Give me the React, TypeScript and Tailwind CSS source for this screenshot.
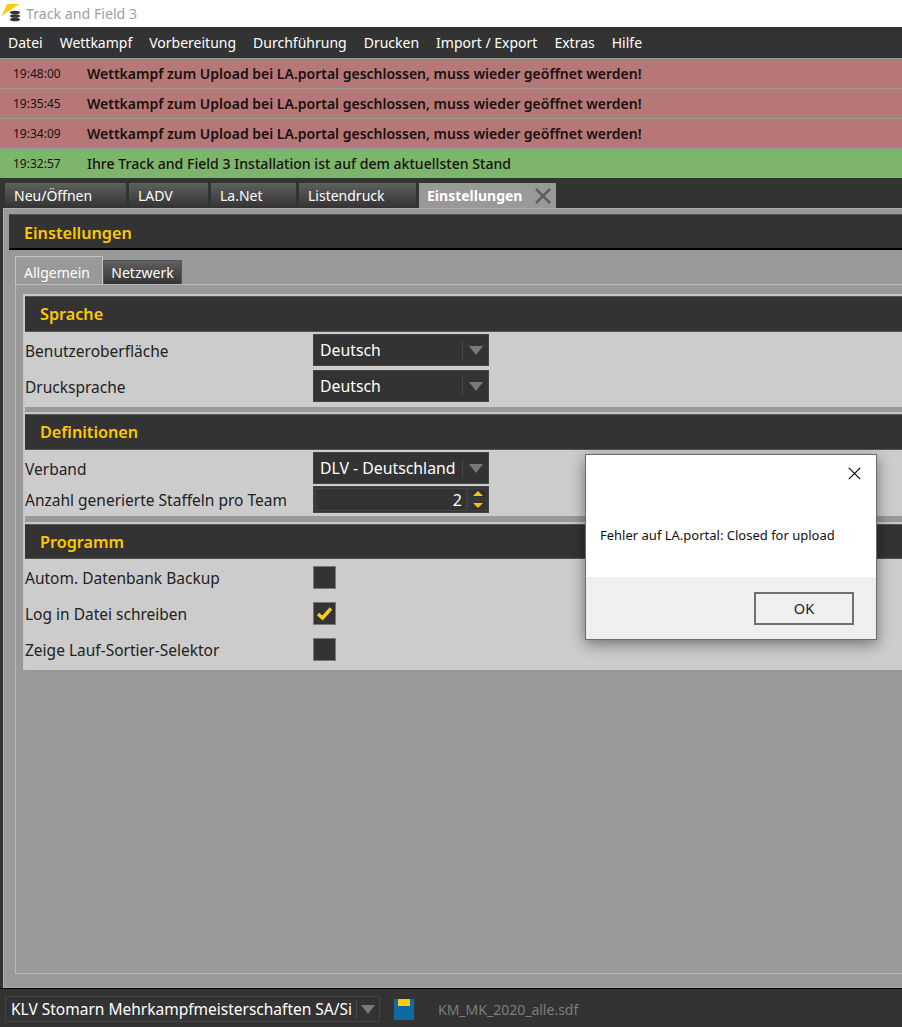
import React from "react";

const menuItems = ["Datei", "Wettkampf", "Vorbereitung", "Durchführung", "Drucken", "Import / Export", "Extras", "Hilfe"];

const messages = [
  { time: "19:48:00", text: "Wettkampf zum Upload bei LA.portal geschlossen, muss wieder geöffnet werden!", ok: false },
  { time: "19:35:45", text: "Wettkampf zum Upload bei LA.portal geschlossen, muss wieder geöffnet werden!", ok: false },
  { time: "19:34:09", text: "Wettkampf zum Upload bei LA.portal geschlossen, muss wieder geöffnet werden!", ok: false },
  { time: "19:32:57", text: "Ihre Track and Field 3 Installation ist auf dem aktuellsten Stand", ok: true },
];

function Logo() {
  return (
    <svg width="22" height="27" viewBox="0 0 22 27" className="shrink-0">
      <polygon points="1.5,16 7,4 19.5,4" fill="#fcc913" />
      <ellipse cx="15" cy="12.5" rx="5" ry="1.8" fill="#333" />
      <ellipse cx="15" cy="16" rx="5" ry="1.8" fill="#333" />
      <ellipse cx="15" cy="19.5" rx="5" ry="1.8" fill="#333" />
    </svg>
  );
}

function CloseIcon({ size, stroke, color }: { size: number; stroke: number; color: string }) {
  return (
    <svg width={size} height={size} viewBox="0 0 16 16" className="shrink-0">
      <path d="M1 1L15 15M15 1L1 15" fill="none" stroke={color} strokeWidth={stroke} />
    </svg>
  );
}

function Arrow() {
  return <span className="h-0 w-0 border-x-[7px] border-t-[9px] border-x-transparent border-t-[#7a7a7a]" />;
}

function Dropdown({ value }: { value: string }) {
  return (
    <div className="flex h-[32px] w-[176px] items-center border border-[#444] bg-[#333] pl-[6px] text-[15.8px] text-white">
      <span className="flex-1 whitespace-nowrap pt-[2px]">{value}</span>
      <span className="h-[19px] w-px bg-[#484848]" />
      <span className="flex w-[25px] justify-center">
        <Arrow />
      </span>
    </div>
  );
}

function Spinner() {
  return (
    <div className="flex h-[27px] w-[176px] items-stretch border border-[#444] bg-[#333] p-px text-[16px] text-white">
      <span className="flex flex-1 items-center justify-end border border-[#444] pr-[4px] pt-[1px]">2</span>
      <span className="flex w-[20px] flex-col gap-px pl-px">
        <span className="flex flex-1 items-center justify-center border border-[#3d3d3d]">
          <span className="h-0 w-0 border-x-[5px] border-b-[5px] border-x-transparent border-b-[#f5c211]" />
        </span>
        <span className="flex flex-1 items-center justify-center border border-[#3d3d3d]">
          <span className="h-0 w-0 border-x-[5px] border-t-[5px] border-x-transparent border-t-[#f5c211]" />
        </span>
      </span>
    </div>
  );
}

function CheckBox({ checked }: { checked?: boolean }) {
  return (
    <div className="flex h-[23px] w-[23px] items-center justify-center border border-[#777] bg-[#333]">
      {checked && (
        <svg width="17" height="15" viewBox="0 0 17 15">
          <path d="M2 8L6.5 12L15 2.5" fill="none" stroke="#f9c824" strokeWidth="3.4" />
        </svg>
      )}
    </div>
  );
}

function SectionHeader({ title, className }: { title: string; className: string }) {
  return (
    <div className={`flex items-center border-y border-[#555] bg-[#333] pl-[15px] text-[16.2px] font-semibold text-[#ffc800] ${className}`}>
      {title}
    </div>
  );
}

function Row({ label, height, children }: { label: string; height: string; children: React.ReactNode }) {
  return (
    <div className={`flex items-center ${height}`}>
      <span className="w-[288px] whitespace-nowrap pt-[3px] text-[15.5px] text-[#222]">{label}</span>
      {children}
    </div>
  );
}

export default function App() {
  return (
    <div className="relative flex h-[1027px] w-[902px] flex-col overflow-hidden bg-[#333] font-['Noto_Sans',sans-serif]">
      {/* title bar */}
      <div className="flex h-[27px] items-center gap-[4px] bg-white text-[14.2px] text-[#9aa2a8]">
        <Logo />
        <span>Track and Field 3</span>
      </div>

      {/* menu */}
      <div className="flex h-[31px] items-center gap-[17px] bg-[#333] pl-[8px] text-[14px] text-white">
        {menuItems.map((item) => (
          <span key={item}>{item}</span>
        ))}
      </div>

      {/* log messages */}
      <div className="flex flex-col bg-[#999] pt-px">
        {messages.map((m) => (
          <div
            key={m.time}
            className={`flex h-[30px] items-center border-b border-[#999] text-[#1a1010] last:h-[29px] last:border-b-0 ${m.ok ? "bg-[#7db56c]" : "bg-[#b57876]"}`}
          >
            <span className="w-[87px] pl-[13px] text-[12px]">{m.time}</span>
            <span className={`whitespace-nowrap ${m.ok ? "text-[14.1px] font-medium" : "text-[14px] font-semibold"}`}>{m.text}</span>
          </div>
        ))}
      </div>

      {/* document tabs */}
      <div className="flex h-[30px] items-end gap-[3px] pl-[5px] text-[14px] text-white">
        {[
          { name: "Neu/Öffnen", w: "w-[121px]" },
          { name: "LADV", w: "w-[79px]" },
          { name: "La.Net", w: "w-[85px]" },
          { name: "Listendruck", w: "w-[117px]" },
        ].map((tab) => (
          <div
            key={tab.name}
            className={`flex h-[25px] items-center bg-gradient-to-b from-[#606060] to-[#333] pl-[9px] ${tab.w}`}
          >
            {tab.name}
          </div>
        ))}
        <div className="flex h-[25px] w-[137px] items-center justify-between bg-[#999] pl-[8px] pr-[5px] font-bold">
          <span>Einstellungen</span>
          <CloseIcon size={16} stroke={2.6} color="#5f5f5f" />
        </div>
      </div>

      {/* main panel */}
      <div className="ml-[3px] flex h-[780px] flex-col border-b border-l border-t border-[#b0b0b0] bg-[#999] pl-[5px] pt-[5px]">
        <div className="flex h-[36px] items-center border-b-2 border-t border-b-black border-t-[#555] bg-[#333] pl-[15px] pt-[3px] text-[16.2px] font-semibold text-[#ffc800]">
          Einstellungen
        </div>

        <div className="mt-[6px] flex h-[29px] items-end pl-[6px] text-[14px] text-white">
          <div className="flex h-[29px] w-[88px] items-center border-x border-t border-[#c4c4c4] bg-[#999] pl-[8px] pt-[2px]">
            Allgemein
          </div>
          <div className="flex h-[25px] w-[79px] items-center justify-center border-x border-t border-[#555] bg-gradient-to-b from-[#606060] to-[#333] pb-[2px]">
            Netzwerk
          </div>
        </div>

        <div className="-mt-[1px] ml-[6px] h-[690px] border-b border-l border-t border-[#b8b8b8] pl-[7px] pt-[9px]">
          <div className="border-l-2 border-t-2 border-[#c8c8c8]">
            <SectionHeader title="Sprache" className="h-[36px]" />
            <div className="bg-[#ccc] pb-[3px]">
              <Row label="Benutzeroberfläche" height="h-[36px]">
                <Dropdown value="Deutsch" />
              </Row>
              <Row label="Drucksprache" height="h-[36px]">
                <Dropdown value="Deutsch" />
              </Row>
            </div>

            <div className="h-[7px] border-b-2 border-[#c8c8c8] bg-[#999]" />
            <SectionHeader title="Definitionen" className="h-[36px]" />
            <div className="bg-[#ccc] pb-[1px] pt-[2px]">
              <Row label="Verband" height="h-[32px]">
                <Dropdown value="DLV - Deutschland" />
              </Row>
              <Row label="Anzahl generierte Staffeln pro Team" height="h-[31px]">
                <Spinner />
              </Row>
            </div>

            <div className="h-[8px] border-b-2 border-[#c8c8c8] bg-[#999]" />
            <SectionHeader title="Programm" className="h-[35px] pt-[2px]" />
            <div className="bg-[#ccc] pb-[3px]">
              <Row label="Autom. Datenbank Backup" height="h-[36px]">
                <CheckBox />
              </Row>
              <Row label="Log in Datei schreiben" height="h-[36px]">
                <CheckBox checked />
              </Row>
              <Row label="Zeige Lauf-Sortier-Selektor" height="h-[36px]">
                <CheckBox />
              </Row>
            </div>
          </div>
        </div>
      </div>

      {/* status bar */}
      <div className="flex flex-1 items-center border-t border-black pl-[5px] pt-[2px]">
        <div className="flex h-[26px] w-[375px] items-center border border-[#444] pl-[5px] text-[15.5px] text-white">
          <span className="w-[345px] overflow-hidden whitespace-nowrap pt-[2px]">KLV Stomarn Mehrkampfmeisterschaften SA/Si</span>
          <span className="h-[19px] w-px bg-[#484848]" />
          <span className="flex flex-1 justify-center">
            <Arrow />
          </span>
        </div>
        <svg width="20" height="21" viewBox="0 0 20 21" className="ml-[14px]">
          <rect width="20" height="21" fill="#0f6aa3" />
          <rect x="4" width="12" height="7" fill="#fcc913" />
        </svg>
        <span className="ml-[24px] text-[14px] text-[#7d7d7d]">KM_MK_2020_alle.sdf</span>
      </div>

      {/* message dialog */}
      <div className="absolute left-[585px] top-[454px] flex h-[186px] w-[292px] flex-col border border-[#6b6b6b] bg-white shadow-[0_4px_14px_rgba(0,0,0,0.45)]">
        <div className="flex h-[122px] flex-col">
          <div className="flex justify-end pr-[15px] pt-[12px]">
            <CloseIcon size={13} stroke={1.4} color="#000" />
          </div>
          <p className="mt-[46px] pl-[14px] text-[13px] text-[#111]">Fehler auf LA.portal: Closed for upload</p>
        </div>
        <div className="flex flex-1 items-start justify-end bg-[#efefef] pr-[22px] pt-[15px]">
          <div className="flex h-[33px] w-[100px] items-center justify-center border-2 border-[#707070] bg-[#efefef] text-[14.5px] text-[#222]">
            OK
          </div>
        </div>
      </div>
    </div>
  );
}
